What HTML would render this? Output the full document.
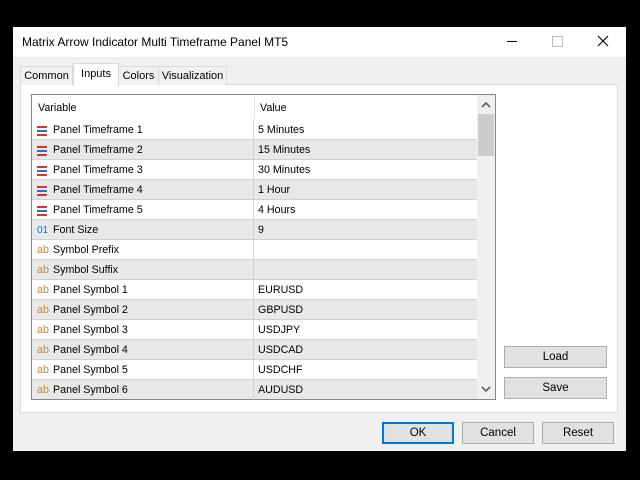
<!DOCTYPE html><html><head><style>
body{margin:0;width:640px;height:480px;background:#000;position:relative;font-family:"Liberation Sans",sans-serif;font-size:10.7px;color:#000;overflow:hidden}
.a{position:absolute}
.win{left:13px;top:27px;width:613px;height:424px;background:#f0f0f0}
.title{left:13px;top:27px;width:613px;height:30px;background:#fff}
.btn{position:absolute;background:#e1e1e1;border:1px solid #adadad;box-sizing:border-box;text-align:center;line-height:20px;font-size:11.5px}
.tab{position:absolute;top:66px;height:19px;border:1px solid #d9d9d9;border-bottom:none;box-sizing:border-box;text-align:center;line-height:19px;background:#f0f0f0;font-size:11px}
.row{position:absolute;left:32px;width:445px;height:20px;border-bottom:1px solid #d0d0d0;box-sizing:border-box;line-height:21px}
.row.g{background:#e8e8e8}
.row .n{position:absolute;left:21px}
.row .v{position:absolute;left:226px}
.row .ic{position:absolute;left:5px;top:0}
.cd{position:absolute;left:221px;top:0;width:1px;height:20px;background:#d0d0d0}
</style></head><body>
<div class="a win"></div>
<div class="a title"></div>
<div class="a" style="left:22px;top:35px;font-size:12px">Matrix Arrow Indicator Multi Timeframe Panel MT5</div>
<div class="a" style="left:507px;top:41px;width:10px;height:1px;background:#000"></div>
<div class="a" style="left:552px;top:36px;width:9px;height:9px;border:1px solid #bbb"></div>
<svg class="a" style="left:597px;top:35px" width="12" height="12"><path d="M1 1L11 11M11 1L1 11" stroke="#000" stroke-width="1.1"/></svg>
<div class="a" style="left:20px;top:84px;width:598px;height:329px;background:#fff;border:1px solid #d9d9d9;box-sizing:border-box"></div>
<div class="tab" style="left:20px;width:53px">Common</div>
<div class="tab" style="left:73px;top:63px;height:23px;width:46px;background:#fff;line-height:20px">Inputs</div>
<div class="tab" style="left:118px;width:41px">Colors</div>
<div class="tab" style="left:158px;width:69px">Visualization</div>
<div class="a" style="left:31px;top:94px;width:465px;height:306px;border:1px solid #828790;box-sizing:border-box;background:#fff;overflow:hidden">
<div class="a" style="left:6px;top:7px">Variable</div>
<div class="a" style="left:222px;top:0;width:1px;height:24px;background:#e5e5e5"></div>
<div class="a" style="left:228px;top:7px">Value</div>
<div class="a" style="left:445px;top:0;width:18px;height:304px;background:#f0f0f0"></div>
<svg class="a" style="left:449px;top:6px" width="10" height="8"><path d="M1 6L5 2L9 6" stroke="#606060" stroke-width="1.6" fill="none"/></svg>
<div class="a" style="left:446px;top:19px;width:16px;height:42px;background:#cdcdcd"></div>
<svg class="a" style="left:449px;top:290px" width="10" height="8"><path d="M1 2L5 6L9 2" stroke="#606060" stroke-width="1.6" fill="none"/></svg>
</div>
<div id="rows"></div>
<div class="btn" style="left:504px;top:346px;width:103px;height:22px">Load</div>
<div class="btn" style="left:504px;top:377px;width:103px;height:22px">Save</div>
<div class="btn" style="left:382px;top:422px;width:72px;height:22px;border:2px solid #0078d7;line-height:18px">OK</div>
<div class="btn" style="left:462px;top:422px;width:72px;height:22px">Cancel</div>
<div class="btn" style="left:542px;top:422px;width:72px;height:22px">Reset</div>
<script>
var d=[["t","Panel Timeframe 1","5 Minutes"],["t","Panel Timeframe 2","15 Minutes"],["t","Panel Timeframe 3","30 Minutes"],["t","Panel Timeframe 4","1 Hour"],["t","Panel Timeframe 5","4 Hours"],["n","Font Size","9"],["a","Symbol Prefix",""],["a","Symbol Suffix",""],["a","Panel Symbol 1","EURUSD"],["a","Panel Symbol 2","GBPUSD"],["a","Panel Symbol 3","USDJPY"],["a","Panel Symbol 4","USDCAD"],["a","Panel Symbol 5","USDCHF"],["a","Panel Symbol 6","AUDUSD"]];
var h="";d.forEach(function(r,i){var ic=r[0]=="t"?'<svg class="ic" style="top:5px" width="11" height="12"><rect x="0" y="1" width="10" height="2" fill="#e03030"/><rect x="0" y="5" width="10" height="2" fill="#2a6fd0"/><rect x="0" y="9" width="10" height="2" fill="#e03030"/></svg>':r[0]=="n"?'<span class="ic" style="color:#1f6fc0;font-size:10px">01</span>':'<span class="ic" style="color:#c08a30">ab</span>';
h+='<div class="row'+(i%2?' g':'')+'" style="top:'+(120+i*20)+'px;'+(i==13?'height:19px;border:none':'')+'">'+ic+'<span class="n">'+r[1]+'</span><div class="cd"></div><span class="v">'+r[2]+'</span></div>';});
document.getElementById("rows").innerHTML=h;
</script>
</body></html>
